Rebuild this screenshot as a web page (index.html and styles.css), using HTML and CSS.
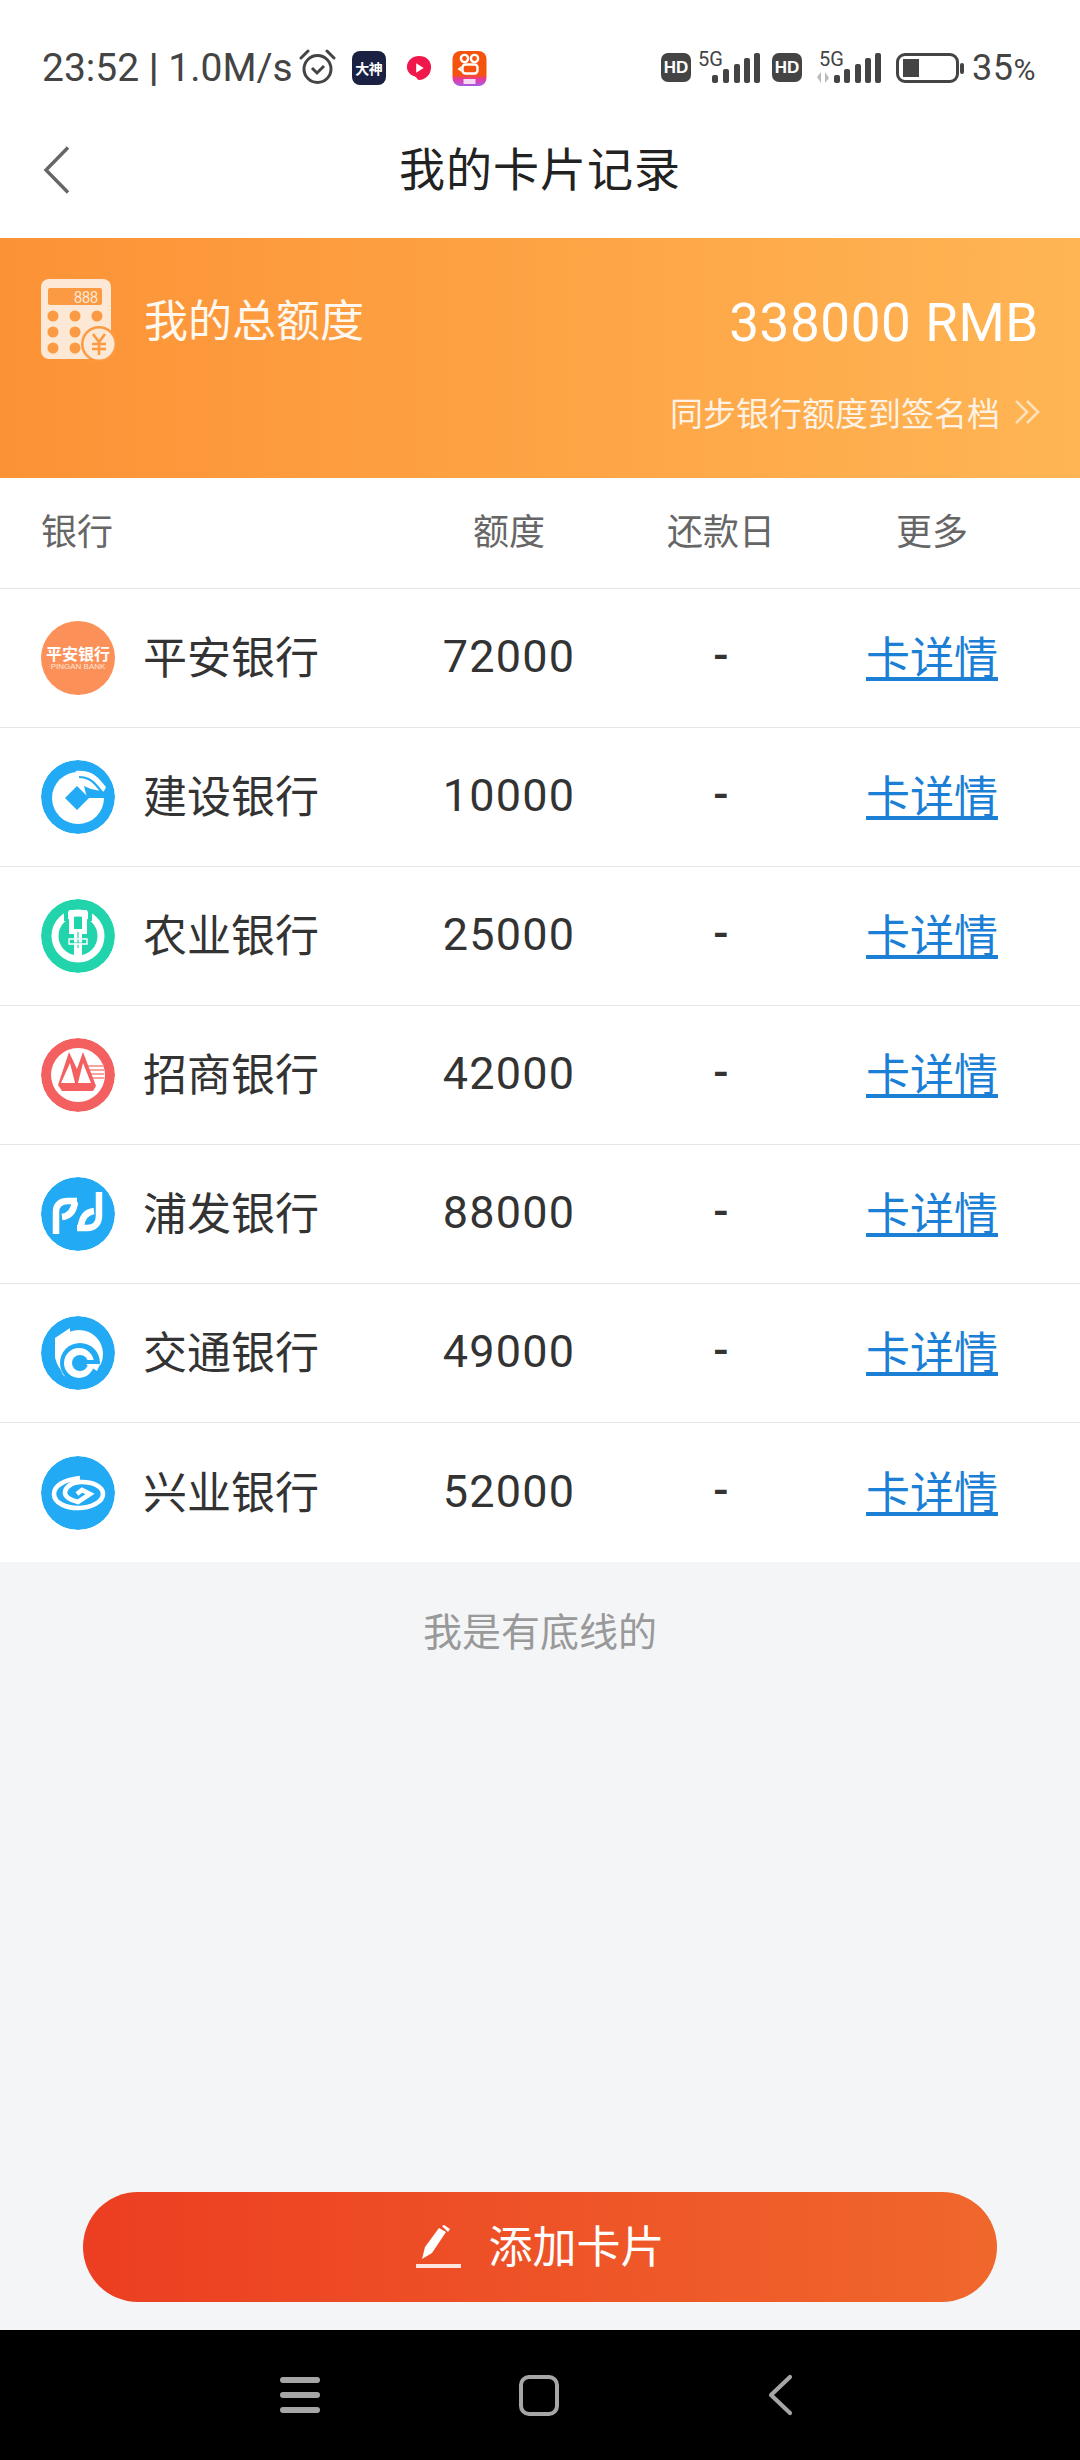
FILE: index.html
```html
<!DOCTYPE html>
<html>
<head>
<meta http-equiv="Content-Type" content="text/html; charset=utf-8" />
<title>我的卡片记录</title>
<link rel="stylesheet" href="styles.css">
</head>

<body>
<div class="page">
	<div class="status">
		<div class="status-left">
			<span class="clock">23:52 <b>|</b> 1.0M/s</span>
			<svg class="ico-alarm" width="37" height="36" viewBox="0 0 37 36" fill="none" stroke="#444" stroke-width="3"><circle cx="18.5" cy="20" r="13.5"/><path d="M13 19l5 5 7-7"/><path d="M2 9l7-7M35 9l-7-7" stroke-linecap="round"/></svg>
			<span class="app-dashen">大神</span>
			<svg class="ico-red" width="26" height="26" viewBox="0 0 28 28"><path d="M14 1c8 0 13 5 13 12 0 8-6 14-13 14-2 0-2-3-5-4-4-1-8-5-8-10C1 6 7 1 14 1z" fill="#f0184a"/><path d="M11 9l8 5-8 5z" fill="#fff"/></svg>
			<svg class="ico-kuai" width="35" height="35" viewBox="0 0 34 35"><defs><linearGradient id="kg" x1="0" y1="0" x2="0" y2="1"><stop offset="0.68" stop-color="#f5520c"/><stop offset="0.8" stop-color="#e8399a"/><stop offset="1" stop-color="#a55ce8"/></linearGradient></defs><rect width="34" height="35" rx="8" fill="url(#kg)"/><g fill="none" stroke="#fff" stroke-width="2.4"><circle cx="12" cy="7.5" r="3.6"/><circle cx="22" cy="7.5" r="3.6"/><rect x="10" y="13.5" width="15" height="9" rx="3"/></g><path d="M9 15l-4 3 4 3z" fill="#fff"/><rect x="11" y="28" width="12" height="5" fill="#f5d9f5"/></svg>
		</div>
		<div class="status-right">
			<span class="hd">HD</span>
			<div class="sig">
				<span class="sig-text">5G</span>
				<svg width="48" height="30" viewBox="0 0 48 30" fill="#444"><rect x="0" y="22" width="6" height="8" rx="2"/><rect x="11" y="16" width="6" height="14" rx="2"/><rect x="22" y="11" width="6" height="19" rx="2"/><rect x="32" y="5" width="6" height="25" rx="2"/><rect x="42" y="0" width="6" height="30" rx="2"/></svg>
			</div>
			<span class="hd hd2">HD</span>
			<div class="sig sig2">
				<span class="sig-text">5G</span>
				<svg width="66" height="30" viewBox="0 0 66 30"><path d="M6 30V19l-4 5zM10 19v11l4-5z" fill="#bbb"/><g fill="#444"><rect x="19" y="22" width="6" height="8" rx="2"/><rect x="29" y="16" width="6" height="14" rx="2"/><rect x="40" y="11" width="6" height="19" rx="2"/><rect x="50" y="5" width="6" height="25" rx="2"/><rect x="60" y="0" width="6" height="30" rx="2"/></g></svg>
			</div>
			<div class="battery"><div class="battery-fill"></div></div>
			<div class="battery-tip"></div>
			<span class="pct">35<small>%</small></span>
		</div>
	</div>

	<div class="title-bar">
		<svg class="back" width="27" height="48" viewBox="0 0 27 48" fill="none" stroke="#666" stroke-width="3.4"><path d="M25 1.5L3 24l22 22.5"/></svg>
		<span class="title">我的卡片记录</span>
	</div>

	<div class="banner">
		<div class="banner-top">
			<div class="banner-label">
				<svg class="calc" width="76" height="86" viewBox="0 0 76 86">
					<rect x="0" y="2" width="70" height="80" rx="8" fill="#fde8d5"/>
					<rect x="7" y="11" width="54" height="17" rx="2" fill="#fb9a42"/>
					<text x="33" y="26" font-size="17" textLength="24" lengthAdjust="spacingAndGlyphs" fill="#fde8d5" font-family="Liberation Sans">888</text>
					<g fill="#fb9a42"><circle cx="12" cy="39" r="5.5"/><circle cx="34" cy="39" r="5.5"/><circle cx="56" cy="39" r="5.5"/><circle cx="12" cy="55" r="5.5"/><circle cx="34" cy="55" r="5.5"/><circle cx="12" cy="71" r="5.5"/><circle cx="34" cy="71" r="5.5"/></g>
					<circle cx="58" cy="67" r="18" fill="#fb9a42"/>
					<circle cx="58" cy="67" r="15.5" fill="#fde8d5"/>
					<path d="M52 57l6 8 6-8M51 67h14M51 72h14M58 65v13" fill="none" stroke="#fb9a42" stroke-width="2.6"/>
				</svg>
				<span class="banner-name">我的总额度</span>
			</div>
			<span class="banner-total">338000 RMB</span>
		</div>
		<div class="banner-sync">
			<span>同步银行额度到签名档</span>
			<svg width="26" height="26" viewBox="0 0 26 26" fill="none" stroke="#fff" stroke-opacity=".6" stroke-width="2.6"><path d="M2 2l11 11L2 24M13 2l11 11-11 11"/></svg>
		</div>
	</div>

	<div class="row row-head">
		<div class="col-bank">银行</div>
		<div class="col-limit">额度</div>
		<div class="col-day">还款日</div>
		<div class="col-more">更多</div>
	</div>

	<div class="row">
		<div class="col-bank">
			<span class="logo logo-orange"><span class="pa-cn">平安银行</span><span class="pa-en">PINGAN BANK</span></span>
			<span class="bank-name">平安银行</span>
		</div>
		<div class="col-limit">72000</div>
		<div class="col-day">-</div>
		<div class="col-more"><a href="#">卡详情</a></div>
	</div>
	<div class="row">
		<div class="col-bank">
			<svg class="logo" viewBox="0 0 74 74"><circle cx="37" cy="37" r="37" fill="#22aaf5"/><circle cx="37" cy="38" r="26" fill="#fff"/><path d="M34 11c11-1 19 2 25 9l6 7-3 6-10-9z" fill="#fff"/><path d="M38 17c7 0 13 3 17 8l6 7" fill="none" stroke="#22aaf5" stroke-width="2.2"/><path d="M43 26l7 3 15 3v6H46z" fill="#22aaf5"/><path d="M36 26l12 12-12 12-12-12z" fill="#22aaf5"/></svg>
			<span class="bank-name">建设银行</span>
		</div>
		<div class="col-limit">10000</div>
		<div class="col-day">-</div>
		<div class="col-more"><a href="#">卡详情</a></div>
	</div>
	<div class="row">
		<div class="col-bank">
			<svg class="logo" viewBox="0 0 74 74"><circle cx="37" cy="37" r="37" fill="#21d4ac"/><circle cx="37" cy="37" r="23" fill="none" stroke="#fff" stroke-width="7"/><path d="M25 6v16M49 6v16" stroke="#21d4ac" stroke-width="4"/><path d="M28 11h5v19h8V11h5v24h-5v25h-8V35h-5z" fill="#fff"/><path d="M29 40h17M29 44h17M37 33v16" stroke="#21d4ac" stroke-width="1.2"/><path d="M28 40h18v5H28z" fill="none" stroke="#fff" stroke-width="1.4"/></svg>
			<span class="bank-name">农业银行</span>
		</div>
		<div class="col-limit">25000</div>
		<div class="col-day">-</div>
		<div class="col-more"><a href="#">卡详情</a></div>
	</div>
	<div class="row">
		<div class="col-bank">
			<svg class="logo" viewBox="0 0 74 74"><circle cx="37" cy="37" r="37" fill="#f4605f"/><circle cx="37" cy="37" r="27" fill="#fff"/><path d="M47 28h16M47 32h16M47 36h16M47 40h16" stroke="#f7a3a2" stroke-width="2"/><path d="M17 47L28 14l8 17 6-17 13 34-3 5H21z" fill="#f4605f"/><path d="M20 45h14l-5-20zM37 45h13l-8-20z" fill="#fff"/></svg>
			<span class="bank-name">招商银行</span>
		</div>
		<div class="col-limit">42000</div>
		<div class="col-day">-</div>
		<div class="col-more"><a href="#">卡详情</a></div>
	</div>
	<div class="row">
		<div class="col-bank">
			<svg class="logo" viewBox="0 0 74 74"><circle cx="37" cy="37" r="37" fill="#22aaf5"/><g fill="none" stroke="#fff" stroke-width="6.5"><path d="M15 57V35c0-8 5-11 12-11h9"/><path d="M34 25c-1 8-5 14-13 15"/><path d="M58 15v24c0 8-5 12-12 12h-10"/><path d="M40 49c1-8 5-14 13-15"/></g></svg>
			<span class="bank-name">浦发银行</span>
		</div>
		<div class="col-limit">88000</div>
		<div class="col-day">-</div>
		<div class="col-more"><a href="#">卡详情</a></div>
	</div>
	<div class="row">
		<div class="col-bank">
			<svg class="logo" viewBox="0 0 74 74"><circle cx="37" cy="37" r="37" fill="#22aaf5"/><path d="M14 22l15-10v12l1 40-8-5-8-18z" fill="#fff"/><circle cx="38" cy="38" r="24" fill="#fff"/><circle cx="39" cy="47" r="20" fill="#22aaf5"/><circle cx="38" cy="47" r="15" fill="#fff"/><circle cx="39" cy="47" r="8" fill="#22aaf5"/><path d="M42 44h15v4H42z" fill="#22aaf5"/><path d="M45 48h14l-3 7z" fill="#fff"/></svg>
			<span class="bank-name">交通银行</span>
		</div>
		<div class="col-limit">49000</div>
		<div class="col-day">-</div>
		<div class="col-more"><a href="#">卡详情</a></div>
	</div>
	<div class="row">
		<div class="col-bank">
			<svg class="logo" viewBox="0 0 74 74"><circle cx="37" cy="37" r="37" fill="#22aaf5"/><path d="M39 22C22 24 13 30 13 38c0 9 12 14 24 14 13 0 25-6 25-14 0-8-11-12-21-12-10 0-17 5-17 11 0 4 6 7 13 9l12-8-8-4-5 4" fill="none" stroke="#fff" stroke-width="4.6"/></svg>
			<span class="bank-name">兴业银行</span>
		</div>
		<div class="col-limit">52000</div>
		<div class="col-day">-</div>
		<div class="col-more"><a href="#">卡详情</a></div>
	</div>

	<div class="bottom-line">我是有底线的</div>

	<div class="add-wrap">
		<div class="add-btn">
			<svg width="45" height="43" viewBox="0 0 45 43" fill="#fff"><path d="M6 34l3-12L23 3l7 4-14 21z"/><path d="M26 1l2-1 6 4-2 3z"/><rect x="0" y="39" width="45" height="4" opacity=".85"/></svg>
			<span>添加卡片</span>
		</div>
	</div>

	<div class="navbar">
		<div class="nav-menu"><i></i><i></i><i></i></div>
		<div class="nav-home"></div>
		<svg class="nav-back" width="26" height="42" viewBox="0 0 26 42" fill="none" stroke="#a6a6a6" stroke-width="4.2" stroke-linecap="round" stroke-linejoin="round"><path d="M23 3L4 21l19 18"/></svg>
	</div>
</div>
</body>
</html>
```

FILE: styles.css
```css
*{ margin:0; padding:0; box-sizing:border-box;}
body{ width:1080px; height:2460px; background:#f4f5f7; font-family:"Noto Sans CJK SC","Noto Sans",sans-serif; overflow:hidden;}
a{ color:#1c7fd6;}
.page{ width:1080px; height:2460px; display:flex; flex-direction:column;}

.status{ height:104px; background:#fff; display:flex; justify-content:space-between; align-items:flex-start; padding:49px 44px 0 42px;}
.status-left{ display:flex; align-items:center; height:38px;}
.clock{ font-family:Roboto,"Liberation Sans",sans-serif; font-size:39px; color:#444; line-height:38px;}
.clock b{ font-weight:700;}
.ico-alarm{ margin-left:6px; margin-top:-3px;}
.app-dashen{ width:34px; height:34px; margin-left:16px; border-radius:8px; background:#1a2142; color:#fff; font-size:14px; font-weight:700; line-height:34px; letter-spacing:-.5px; text-align:center; white-space:nowrap;}
.ico-red{ margin-left:20px;}
.ico-kuai{ margin-left:20px;}
.status-right{ display:flex; align-items:flex-start; height:38px;}
.hd{ width:30px; height:29px; margin-top:4px; border-radius:7px; background:#444; color:#fff; font:700 17px/29px "Liberation Sans",sans-serif; text-align:center;}
.hd2{ margin-left:12px;}
.sig{ position:relative; width:62px; height:34px; margin-left:7px; display:flex; justify-content:flex-end; align-items:flex-end;}
.sig2{ width:66px; margin-left:13px;}
.sig-text{ position:absolute; left:0; top:-1px; font:20px/22px Roboto,sans-serif; color:#444;}
.sig2 .sig-text{ left:4px;}
.battery{ width:63px; height:30px; margin-left:15px; margin-top:4px; border:3px solid #444; border-radius:9px; padding:3px 4px;}
.battery-fill{ width:16px; height:100%; background:#444;}
.battery-tip{ width:4px; height:11px; margin:14px 0 0 1px; background:#444; border-radius:2px;}
.pct{ font-family:Roboto,sans-serif; font-size:36px; line-height:36px; color:#444; margin:1px 0 0 8px; letter-spacing:.5px;}
.pct small{ font-size:30px;}

.title-bar{ position:relative; height:134px; background:#fff; display:flex; align-items:center; justify-content:center; padding-bottom:10px;}
.back{ position:absolute; left:43px; top:42px;}
.title{ font-size:46px; color:#222; line-height:60px; letter-spacing:1px;}

.banner{ height:240px; background:linear-gradient(90deg,#fc9236,#ffb554); padding:39px 41px 0; color:#fff;}
.banner-top{ display:flex; justify-content:space-between; align-items:flex-start;}
.banner-label{ display:flex; align-items:flex-start;}
.calc{ flex:none;}
.banner-name{ margin:13px 0 0 27px; font-size:44px; line-height:56px; color:#fff8f0;}
.banner-total{ margin-top:18px; font-family:Roboto,"Liberation Sans",sans-serif; font-size:53px; line-height:56px; letter-spacing:.6px;}
.banner-sync{ display:flex; justify-content:flex-end; align-items:center; gap:14px; margin:27px -1px 0 0; font-size:33px; line-height:44px; color:#fdf2e4;}

.row{ height:139px; background:#fff; border-bottom:1px solid #e6e6e6; display:flex; align-items:center; font-size:44px; color:#333;}
.row:nth-last-of-type(4){ border-bottom:0;}
.row-head{ height:111px; padding-bottom:8px; font-size:36px; color:#666;}
.col-bank{ width:400px; padding-left:41px; display:flex; align-items:center;}
.bank-name{ margin-bottom:6px;}
.col-limit{ width:218px; margin-bottom:3px; text-align:center; font-family:Roboto,"Liberation Sans",sans-serif; font-size:45px; letter-spacing:1.2px;}
.col-day{ width:206px; margin-bottom:7px; text-align:center; font-family:Roboto,sans-serif; font-size:45px; font-weight:500;}
.col-more{ width:216px; margin-bottom:6px; text-align:center;}
.row-head .col-limit,.row-head .col-day,.row-head .col-more{ margin-bottom:0; font-family:"Noto Sans CJK SC",sans-serif; font-size:36px; font-weight:400; letter-spacing:0;}
.logo{ flex:none; width:74px; height:74px; margin-right:28px; border-radius:50%;}
.logo-orange{ background:#fc9059; color:#fff; display:flex; flex-direction:column; align-items:center; justify-content:center; white-space:nowrap;}
.pa-cn{ font-size:16px; line-height:17px; font-weight:700;}
.pa-en{ font:8px/10px "Liberation Sans",sans-serif; color:#ffe6d8;}

.bottom-line{ height:140px; padding-top:37px; font-size:39px; line-height:60px; text-align:center; color:#999;}
.add-wrap{ flex:1; display:flex; justify-content:center; align-items:flex-start; padding-top:490px;}
.add-btn{ width:914px; height:110px; padding-bottom:6px; border-radius:55px; background:linear-gradient(90deg,#ec3e22,#f0672c); color:#fff; display:flex; align-items:center; justify-content:center; gap:28px; font-size:44px;}
.add-btn svg{ margin-top:4px;}

.navbar{ height:130px; padding-left:280px; background:#000; display:flex; align-items:center;}
.nav-menu{ width:40px; height:36px; display:flex; flex-direction:column; justify-content:space-between;}
.nav-menu i{ display:block; height:6px; border-radius:3px; background:#a6a6a6;}
.nav-home{ width:40px; height:41px; margin:0 208px 0 199px; border:4px solid #a6a6a6; border-radius:10px;}
.nav-back{ flex:none;}
```
